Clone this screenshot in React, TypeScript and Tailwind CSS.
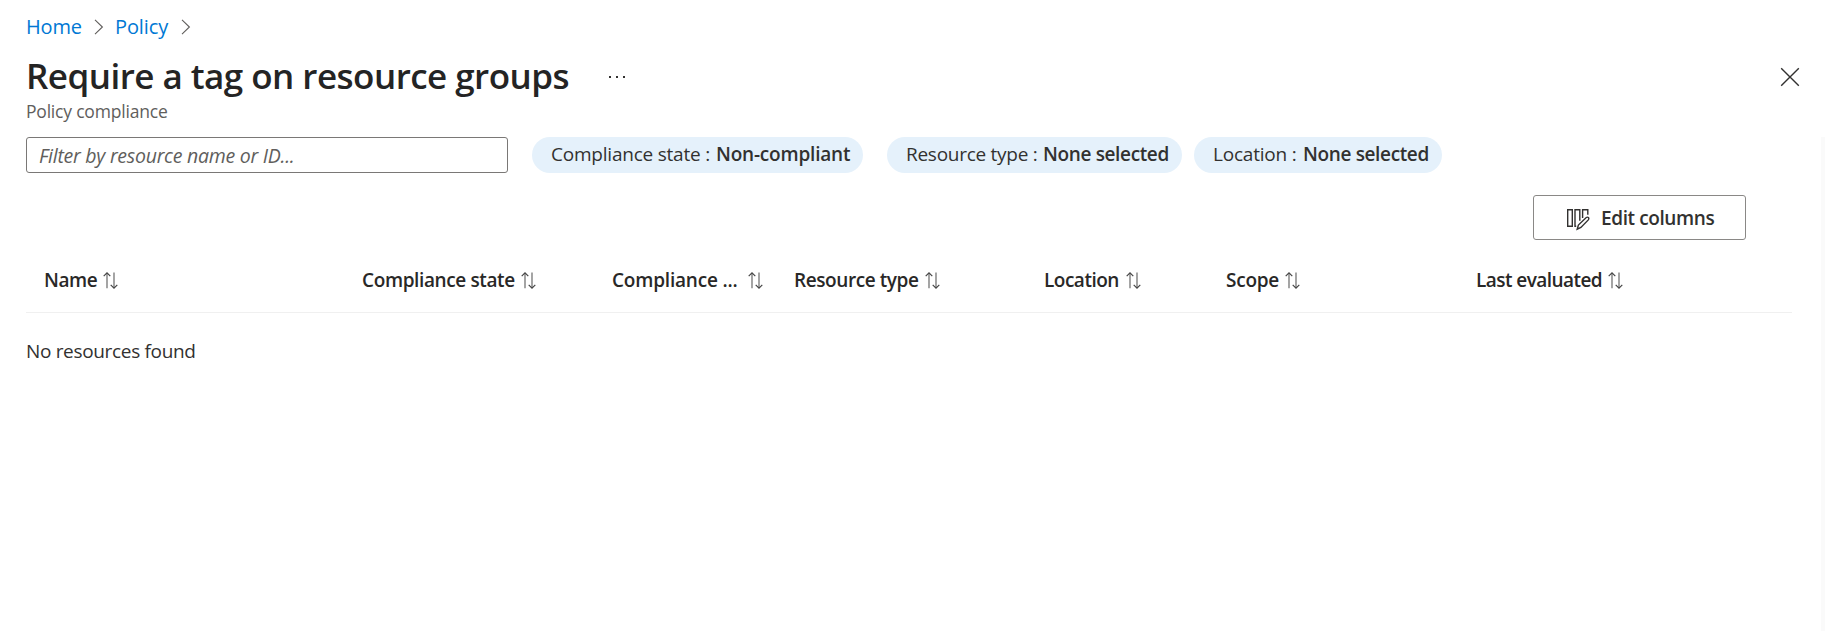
import React from 'react';

function SortIcon() {
  return (
    <svg width="15" height="17" viewBox="0 0 15 17" fill="none" className="shrink-0">
      <path d="M4 16.2V1M11 0.5V16" stroke="#757575" strokeWidth="1.3" />
      <path d="M0.7 4.2L4 0.9L7.3 4.2M7.7 12.8L11 16.1L14.3 12.8" stroke="#444" strokeWidth="1.2" />
    </svg>
  );
}

function Chevron() {
  return (
    <svg width="10" height="16" viewBox="0 0 10 16" fill="none" stroke="#605e5c" strokeWidth="1.1" className="shrink-0">
      <path d="M1 0.8L8.4 8L1 15.2" />
    </svg>
  );
}

const columns = [
  { label: 'Name', cell: 'w-[318px]', text: 'w-[54px] tracking-[-0.4px]', gap: 'gap-[5px]' },
  { label: 'Compliance state', cell: 'w-[250px]', text: 'w-[154px] tracking-[-0.38px]', gap: 'gap-[5px]' },
  { label: 'Compliance ...', cell: 'w-[182px]', text: 'w-[126px] tracking-[-0.2px]', gap: 'gap-[10px]' },
  { label: 'Resource type', cell: 'w-[250px]', text: 'w-[126px] tracking-[-0.42px]', gap: 'gap-[5px]' },
  { label: 'Location', cell: 'w-[182px]', text: 'w-[77px] tracking-[-0.5px]', gap: 'gap-[5px]' },
  { label: 'Scope', cell: 'w-[250px]', text: 'w-[54px] tracking-[-0.25px]', gap: 'gap-[5px]' },
  { label: 'Last evaluated', cell: 'w-[300px]', text: 'w-[127px] tracking-[-0.55px]', gap: 'gap-[5px]' },
];

const filters = [
  { label: 'Compliance state :', value: 'Non-compliant', box: 'w-[331px] pl-[19px]', l: 'w-[165px] tracking-[-0.22px]', v: 'tracking-[-0.2px]' },
  { label: 'Resource type :', value: 'None selected', box: 'ml-6 w-[295px] pl-[19px]', l: 'w-[137px] tracking-[-0.27px]', v: 'tracking-[-0.36px]' },
  { label: 'Location :', value: 'None selected', box: 'ml-3 w-[248px] pl-[19px]', l: 'w-[90px] tracking-[-0.2px]', v: 'tracking-[-0.36px]' },
];

export default function App() {
  return (
    <div className="flex h-[631px] w-[1825px] flex-col overflow-hidden whitespace-nowrap bg-white font-['Open_Sans',sans-serif] text-[19px] text-[#323130]">
      <nav className="flex h-[53px] items-center pl-[26px] text-[20px] leading-[53px] text-[#0078d4]">
        <a className="w-[68px] tracking-[-0.2px]">Home</a>
        <Chevron />
        <a className="ml-[11px] w-[66px] tracking-[-0.1px]">Policy</a>
        <Chevron />
      </nav>
      <header className="flex h-[47px] items-center pl-[26px]">
        <h1 className="w-[582px] pb-[2px] text-[35px] font-semibold leading-[44px] tracking-[-0.53px] text-[#242424]">Require a tag on resource groups</h1>
        <svg width="18" height="4" viewBox="0 0 18 4" fill="#323130">
          <path d="M1 1h2v2H1zM8 1h2v2H8zM15 1h2v2h-2z" />
        </svg>
        <svg width="20" height="20" viewBox="0 0 20 20" stroke="#323130" strokeWidth="1.4" className="ml-auto mr-[25px]">
          <path d="M1.2 1.2L18.8 18.8M18.8 1.2L1.2 18.8" />
        </svg>
      </header>
      <div className="h-[37px] pl-[26px] text-[17.5px] leading-[23px] tracking-[-0.2px] text-[#605e5c]">Policy compliance</div>
      <div className="flex grow">
        <main className="flex grow flex-col pl-[26px]">
          <div className="flex h-9">
            <input
              className="mr-6 h-9 w-[482px] rounded-[3px] border border-[#7a7876] pl-3 text-[19.5px] tracking-[-0.25px] placeholder:italic placeholder:text-[#605e5c]"
              placeholder="Filter by resource name or ID..."
            />
            {filters.map((f) => (
              <div key={f.label} className={`flex h-9 rounded-full bg-[#e5f1fb] leading-[35px] ${f.box}`}>
                <span className={`shrink-0 ${f.l}`}>{f.label}</span>
                <span className={`font-semibold ${f.v}`}>{f.value}</span>
              </div>
            ))}
          </div>
          <div className="mt-[22px] flex justify-end pr-[75px]">
            <button className="flex h-[45px] w-[213px] items-center rounded-[3px] border border-[#8a8886] pl-8 pt-[2px]">
              <svg width="24" height="24" viewBox="0 0 24 24" fill="none" stroke="#323130" strokeWidth="1.4">
                <path d="M1.7 2.7h4.6v16.6H1.7zM9 19V2.7h4.8v11M9 2.7v16.6h1.2M16.6 11V2.7h5.2v5" />
                <path d="M11.2 22.2l1.2-4.2 7.6-7.3c2-1.4 3.6.4 2.3 2.2l-7.4 7.6z" />
              </svg>
              <span className="ml-[11px] font-semibold tracking-[-0.4px]">Edit columns</span>
            </button>
          </div>
          <div className="flex h-[73px] w-[1766px] items-center border-b border-[#f0f0f0] pl-[18px] pt-[8px] text-[#292827]">
            {columns.map((c) => (
              <div key={c.label} className={`flex shrink-0 items-center ${c.cell} ${c.gap} last:shrink`}>
                <span className={`shrink-0 font-semibold ${c.text}`}>{c.label}</span>
                <SortIcon />
              </div>
            ))}
          </div>
          <div className="pt-[18px] leading-[40px] tracking-[-0.33px]">No resources found</div>
        </main>
        <div className="w-1 bg-[#fafafa]" />
      </div>
    </div>
  );
}
